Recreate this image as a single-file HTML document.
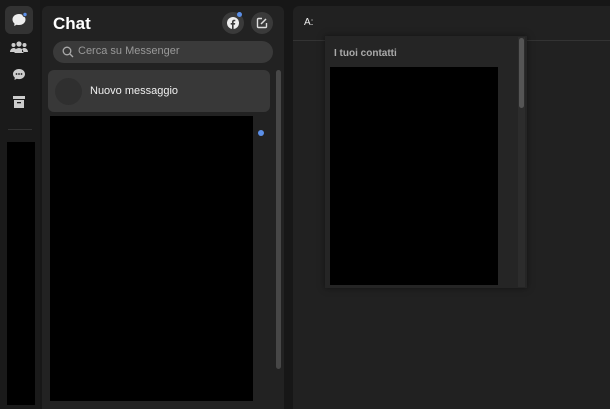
<!DOCTYPE html><html><head><style>
body{margin:0;width:610px;height:409px;background:#171717;position:relative;overflow:hidden;font-family:"Liberation Sans",sans-serif}
.a{position:absolute}
</style></head><body>
<div class="a" style="left:0;top:0;width:40px;height:409px;background:#1a1a1a"></div>
<div class="a" style="left:5px;top:6px;width:28px;height:28px;border-radius:6px;background:#333"></div>
<svg class="a" style="left:10px;top:11px" width="18" height="18" viewBox="0 0 18 18"><path d="M9 3C5 3 2.5 5.5 2.5 8.5c0 1.7.8 3.1 2 4l-.3 2.5 2.4-1.3c.8.2 1.5.3 2.4.3 4 0 6.5-2.5 6.5-5.5S13 3 9 3z" fill="#eee"/><circle cx="15" cy="3.5" r="2.2" fill="#5b8fe8" stroke="#333"/></svg>
<svg class="a" style="left:10px;top:40px" width="18" height="14" viewBox="0 0 18 14"><circle cx="9" cy="4" r="2.6" fill="#ccc"/><circle cx="3.5" cy="5" r="2" fill="#ccc"/><circle cx="14.5" cy="5" r="2" fill="#ccc"/><path d="M4.5 13c0-3 2-5 4.5-5s4.5 2 4.5 5zM0 12c0-2 1.5-4 3.5-4S6 9 6 10.5V12zM18 12c0-2-1.5-4-3.5-4S12 9 12 10.5V12z" fill="#ccc"/></svg>
<svg class="a" style="left:11px;top:67px" width="16" height="16" viewBox="0 0 16 16"><path d="M8 2C4.5 2 2 4.3 2 7c0 1.5.7 2.7 1.8 3.5L3.5 13l2.3-1.2c.7.2 1.4.3 2.2.3 3.5 0 6-2.3 6-5S11.5 2 8 2z" fill="#ccc"/><circle cx="5.5" cy="7" r=".9" fill="#1a1a1a"/><circle cx="8" cy="7" r=".9" fill="#1a1a1a"/><circle cx="10.5" cy="7" r=".9" fill="#1a1a1a"/></svg>
<svg class="a" style="left:12px;top:95px" width="14" height="14" viewBox="0 0 14 14"><rect x="1" y="1" width="12" height="3" fill="#ccc"/><rect x="2" y="5" width="10" height="8" fill="#ccc"/><rect x="5" y="7" width="4" height="1.3" fill="#1a1a1a"/></svg>
<div class="a" style="left:8px;top:129px;width:24px;height:1px;background:#333"></div>
<div class="a" style="left:7px;top:142px;width:28px;height:263px;background:#000"></div>
<div class="a" style="left:42px;top:6px;width:242px;height:403px;background:#222;border-radius:6px 6px 0 0"></div>
<div class="a" style="left:53px;top:14px;color:#fff;font-weight:bold;font-size:17px">Chat</div>
<div class="a" style="left:222px;top:12px;width:22px;height:22px;border-radius:50%;background:#3a3a3a"></div>
<svg class="a" style="left:227px;top:17px" width="12" height="12" viewBox="0 0 12 12"><circle cx="6" cy="6" r="6" fill="#eee"/><path d="M6.6 12V7.6h1.4l.2-1.6H6.6V5c0-.5.2-.8.8-.8h.9V2.8c-.3 0-.8-.1-1.3-.1-1.3 0-2 .8-2 2.1V6H3.7v1.6H5V12z" fill="#3a3a3a"/></svg>
<div class="a" style="left:237px;top:12px;width:5px;height:5px;border-radius:50%;background:#5b8fe8"></div>
<div class="a" style="left:251px;top:12px;width:22px;height:22px;border-radius:50%;background:#3a3a3a"></div>
<svg class="a" style="left:256px;top:17px" width="12" height="12" viewBox="0 0 12 12"><path d="M6 1.5H2.5a1 1 0 0 0-1 1v7a1 1 0 0 0 1 1h7a1 1 0 0 0 1-1V6" fill="none" stroke="#ddd" stroke-width="1.4"/><path d="M5 7l5-5" stroke="#ddd" stroke-width="1.5"/></svg>
<div class="a" style="left:53px;top:41px;width:220px;height:22px;border-radius:11px;background:#3a3a3a"></div>
<svg class="a" style="left:62px;top:46px" width="12" height="12" viewBox="0 0 12 12"><circle cx="5" cy="5" r="3.8" fill="none" stroke="#aaa" stroke-width="1.3"/><path d="M8 8l3 3" stroke="#aaa" stroke-width="1.3"/></svg>
<div class="a" style="left:78px;top:45px;color:#999;font-size:11px">Cerca su Messenger</div>
<div class="a" style="left:48px;top:70px;width:222px;height:42px;border-radius:6px;background:#383838"></div>
<div class="a" style="left:55px;top:78px;width:27px;height:27px;border-radius:50%;background:#2f2f2f"></div>
<div class="a" style="left:90px;top:85px;color:#f0f0f0;font-size:11px">Nuovo messaggio</div>
<div class="a" style="left:50px;top:116px;width:203px;height:285px;background:#000"></div>
<div class="a" style="left:258px;top:130px;width:6px;height:6px;border-radius:50%;background:#5b8fe8"></div>
<div class="a" style="left:276px;top:70px;width:5px;height:299px;border-radius:3px;background:#474747"></div>
<div class="a" style="left:293px;top:6px;width:317px;height:403px;background:#212121;border-radius:6px 0 0 0"></div>
<div class="a" style="left:293px;top:40px;width:317px;height:1px;background:#333"></div>
<div class="a" style="left:304px;top:17px;color:#eee;font-size:10px">A:</div>
<div class="a" style="left:325px;top:36px;width:202px;height:252px;background:#252525;box-shadow:0 0 6px rgba(0,0,0,.5)"></div>
<div class="a" style="left:334px;top:48px;color:#aaa;font-size:10px;font-weight:bold">I tuoi contatti</div>
<div class="a" style="left:330px;top:67px;width:168px;height:218px;background:#000"></div>
<div class="a" style="left:518px;top:37px;width:7px;height:250px;background:#2c2c2c"></div>
<div class="a" style="left:519px;top:38px;width:5px;height:70px;border-radius:3px;background:#555"></div>
</body></html>
